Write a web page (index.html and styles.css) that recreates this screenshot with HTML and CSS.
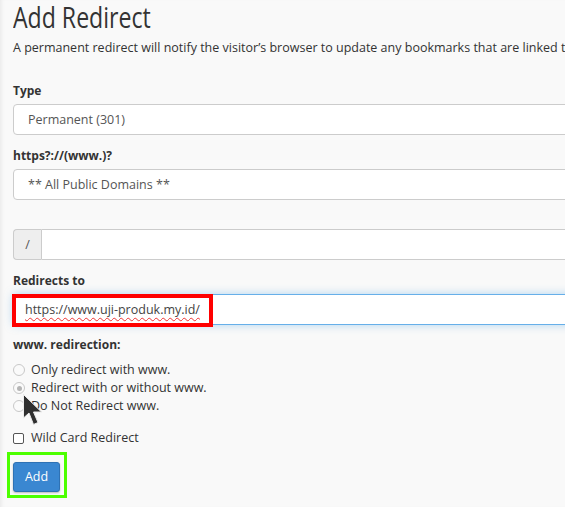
FILE: index.html
```html
<!DOCTYPE html>
<html>
<head>
<meta charset="utf-8">
<link rel="stylesheet" href="styles.css">
</head>
<body>
<div class="page">
  <h1 class="title"><span class="title-text">Add Redirect</span></h1>
  <p class="desc">A permanent redirect will notify the visitor’s browser to update any bookmarks that are linked to the old page.</p>

  <div class="group first">
    <div class="label">Type</div>
    <div class="control">Permanent (301)</div>
  </div>

  <div class="group">
    <div class="label">https?://(www.)?</div>
    <div class="control">** All Public Domains **</div>
  </div>

  <div class="group spaced">
    <div class="input-group">
      <span class="addon">/</span>
      <span class="control flat"></span>
    </div>
  </div>

  <div class="group">
    <div class="label">Redirects to</div>
    <div class="control focus"><span class="typed">https://www.uji-produk.my.id/</span></div>
    <div class="mark-red"></div>
  </div>

  <div class="group tight">
    <div class="label">www. redirection:</div>
    <div class="radios">
      <div class="radio"><span class="rbox"></span>Only redirect with www.</div>
      <div class="radio"><span class="rbox checked"></span>Redirect with or without www.</div>
      <div class="radio"><span class="rbox"></span>Do Not Redirect www.</div>
    </div>
  </div>

  <div class="check"><span class="cbox"></span>Wild Card Redirect</div>

  <div class="actions">
    <span class="btn">Add</span>
    <div class="mark-green"></div>
  </div>

  <svg class="cursor" width="21" height="34" viewBox="0 0 21 34">
    <path d="M1.5 1.5 L1.5 25 L7 20 L11.5 31.5 L16 29.5 L11.5 19 L19.5 19 Z" fill="#2f2f2f" stroke="#ececec" stroke-width="1" stroke-linejoin="round"/>
  </svg>
</div>
</body>
</html>
```
FILE: styles.css
```css
html, body {
  margin: 0;
  padding: 0;
  background: #f9f9f9;
  overflow: hidden;
}
body {
  font-family: "Open Sans", "Noto Sans", sans-serif;
  color: #333;
  width: 565px;
  height: 507px;
}
.page {
  position: relative;
  width: 760px;
  padding: 0 0 0 13px;
  min-height: 507px;
  box-shadow: inset 4px 0 4px -3px rgba(0,0,0,0.08);
}
.title {
  font-size: 30px;
  font-weight: 400;
  margin: 0;
  line-height: 33px;
  color: #333;
}
.title-text {
  display: inline-block;
  transform: scaleX(0.77);
  transform-origin: left center;
}
.desc {
  font-size: 12.5px;
  margin: 6px 0 0;
  line-height: 18px;
  white-space: nowrap;
}
.group {
  margin-top: 13px;
  position: relative;
}
.group.first { margin-top: 26px; }
.group.spaced { margin-top: 29px; }
.group.tight { margin-top: 12px; }
.label {
  font-size: 12px;
  font-weight: 700;
  line-height: 16px;
  margin-bottom: 5px;
}
.control {
  box-sizing: border-box;
  height: 31px;
  border: 1px solid #ccc;
  border-radius: 4px;
  background: #fff;
  font-size: 12.5px;
  color: #555;
  padding: 0 14px;
  line-height: 29px;
}
.control.focus {
  border-color: #66afe9;
  box-shadow: 0 0 8px rgba(102,175,233,0.5);
  padding-left: 11px;
  color: #444;
}
.typed {
  text-decoration: underline wavy #e33;
  text-decoration-thickness: 1px;
  text-underline-offset: 3px;
}
.input-group {
  display: flex;
}
.addon {
  box-sizing: border-box;
  width: 28px;
  height: 31px;
  border: 1px solid #ccc;
  border-right: 0;
  border-radius: 4px 0 0 4px;
  background: #eee;
  font-size: 12.5px;
  color: #555;
  text-align: center;
  line-height: 29px;
}
.control.flat {
  flex: 1;
  border-radius: 0 4px 4px 0;
}
.mark-red {
  position: absolute;
  left: -1px;
  top: 21px;
  width: 201px;
  height: 33px;
  box-sizing: border-box;
  border: 4px solid #f00;
}
.radios {
  margin-top: 8px;
}
.radio, .check {
  display: flex;
  align-items: center;
  font-size: 12.5px;
  line-height: 18px;
  color: #333;
}
.rbox {
  box-sizing: border-box;
  width: 12px;
  height: 12px;
  border: 1px solid #c8c8c8;
  border-radius: 50%;
  background: #fafafa;
  margin: 0 6px 0 0;
  position: relative;
}
.rbox.checked::after {
  content: "";
  position: absolute;
  left: 2.5px;
  top: 2.5px;
  width: 5px;
  height: 5px;
  border-radius: 50%;
  background: #b5b5b5;
}
.check {
  margin-top: 14px;
}
.cbox {
  box-sizing: border-box;
  width: 11px;
  height: 11px;
  border: 1px solid #555;
  border-radius: 2px;
  background: #fff;
  margin: 0 7px 0 0;
}
.actions {
  position: relative;
  margin-top: 15px;
}
.btn {
  display: inline-block;
  box-sizing: border-box;
  width: 47px;
  height: 30px;
  background: #3a87d1;
  border: 1px solid #2f72b4;
  border-radius: 3px;
  color: #fff;
  font-size: 12.5px;
  line-height: 28px;
  text-align: center;
  box-shadow: 0 1px 2px rgba(0,0,0,0.25);
  vertical-align: top;
}
.mark-green {
  position: absolute;
  left: -6px;
  top: -10px;
  width: 60px;
  height: 46px;
  box-sizing: border-box;
  border: 3px solid #4cff00;
}
.cursor {
  position: absolute;
  left: 22px;
  top: 393px;
}
```
